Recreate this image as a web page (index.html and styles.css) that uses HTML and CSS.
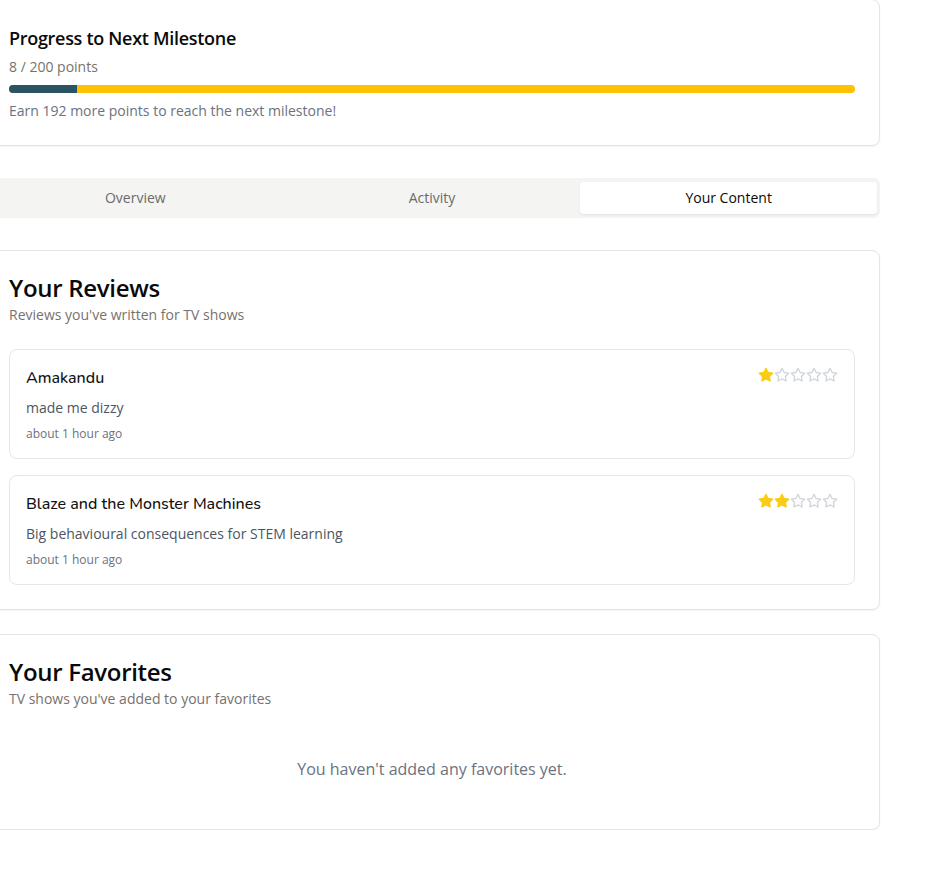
FILE: index.html
```html
<!DOCTYPE html>
<html lang="en">
<head>
<meta charset="utf-8">
<title>Your Content</title>
<link rel="stylesheet" href="styles.css">
</head>
<body>
<div class="page">
  <section class="card progress-card">
    <h3 class="progress-title">Progress to Next Milestone</h3>
    <p class="points">8 / 200 points</p>
    <div class="bar"><div class="bar-fill" style="width: 8%"></div></div>
    <p class="earn">Earn 192 more points to reach the next milestone!</p>
  </section>

  <nav class="tabs">
    <button class="tab">Overview</button>
    <button class="tab">Activity</button>
    <button class="tab active">Your Content</button>
  </nav>

  <section class="card section-card">
    <header class="card-header">
      <h2 class="card-title">Your Reviews</h2>
      <p class="card-desc">Reviews you've written for TV shows</p>
    </header>
    <div class="card-content reviews">
      <article class="review">
        <div class="review-main">
          <h4 class="review-title">Amakandu</h4>
          <p class="review-body">made me dizzy</p>
          <p class="review-time">about 1 hour ago</p>
        </div>
        <div class="stars">
          <svg class="star on" viewBox="0 0 24 24"><polygon points="12 2 15.09 8.26 22 9.27 17 14.14 18.18 21.02 12 17.77 5.82 21.02 7 14.14 2 9.27 8.91 8.26 12 2"/></svg>
          <svg class="star" viewBox="0 0 24 24"><polygon points="12 2 15.09 8.26 22 9.27 17 14.14 18.18 21.02 12 17.77 5.82 21.02 7 14.14 2 9.27 8.91 8.26 12 2"/></svg>
          <svg class="star" viewBox="0 0 24 24"><polygon points="12 2 15.09 8.26 22 9.27 17 14.14 18.18 21.02 12 17.77 5.82 21.02 7 14.14 2 9.27 8.91 8.26 12 2"/></svg>
          <svg class="star" viewBox="0 0 24 24"><polygon points="12 2 15.09 8.26 22 9.27 17 14.14 18.18 21.02 12 17.77 5.82 21.02 7 14.14 2 9.27 8.91 8.26 12 2"/></svg>
          <svg class="star" viewBox="0 0 24 24"><polygon points="12 2 15.09 8.26 22 9.27 17 14.14 18.18 21.02 12 17.77 5.82 21.02 7 14.14 2 9.27 8.91 8.26 12 2"/></svg>
        </div>
      </article>
      <article class="review">
        <div class="review-main">
          <h4 class="review-title">Blaze and the Monster Machines</h4>
          <p class="review-body">Big behavioural consequences for STEM learning</p>
          <p class="review-time">about 1 hour ago</p>
        </div>
        <div class="stars">
          <svg class="star on" viewBox="0 0 24 24"><polygon points="12 2 15.09 8.26 22 9.27 17 14.14 18.18 21.02 12 17.77 5.82 21.02 7 14.14 2 9.27 8.91 8.26 12 2"/></svg>
          <svg class="star on" viewBox="0 0 24 24"><polygon points="12 2 15.09 8.26 22 9.27 17 14.14 18.18 21.02 12 17.77 5.82 21.02 7 14.14 2 9.27 8.91 8.26 12 2"/></svg>
          <svg class="star" viewBox="0 0 24 24"><polygon points="12 2 15.09 8.26 22 9.27 17 14.14 18.18 21.02 12 17.77 5.82 21.02 7 14.14 2 9.27 8.91 8.26 12 2"/></svg>
          <svg class="star" viewBox="0 0 24 24"><polygon points="12 2 15.09 8.26 22 9.27 17 14.14 18.18 21.02 12 17.77 5.82 21.02 7 14.14 2 9.27 8.91 8.26 12 2"/></svg>
          <svg class="star" viewBox="0 0 24 24"><polygon points="12 2 15.09 8.26 22 9.27 17 14.14 18.18 21.02 12 17.77 5.82 21.02 7 14.14 2 9.27 8.91 8.26 12 2"/></svg>
        </div>
      </article>
    </div>
  </section>

  <section class="card section-card favorites">
    <header class="card-header">
      <h2 class="card-title">Your Favorites</h2>
      <p class="card-desc">TV shows you've added to your favorites</p>
    </header>
    <div class="card-content">
      <p class="empty">You haven't added any favorites yet.</p>
    </div>
  </section>
</div>
</body>
</html>
```

FILE: styles.css
```css
* { box-sizing: border-box; }

html, body {
  margin: 0;
  padding: 0;
  background: #ffffff;
}

body {
  font-family: "Open Sans", "Noto Sans", sans-serif;
  color: #0a0a0a;
}

h2, h3, h4, p { margin: 0; }

.page {
  width: 896px;
  margin: -1px 0 0 -16px;
  display: flex;
  flex-direction: column;
}

.card {
  background: #fff;
  border: 1px solid #e4e4e4;
  border-radius: 8px;
  box-shadow: 0 1px 2px rgba(0, 0, 0, 0.05);
}

/* progress card */
.progress-card {
  padding: 24px;
}

.progress-title {
  font-size: 18px;
  line-height: 28px;
  font-weight: 600;
  letter-spacing: -0.3px;
  margin-bottom: 5px;
}

.points {
  font-size: 14px;
  line-height: 20px;
  color: #78716c;
}

.bar {
  margin-top: 8px;
  height: 8px;
  border-radius: 4px;
  background: #fdc202;
  overflow: hidden;
}

.bar-fill {
  height: 100%;
  background: #2b5363;
}

.earn {
  margin-top: 8px;
  font-size: 14px;
  line-height: 20px;
  color: #6b7280;
}

/* tabs */
.tabs {
  margin-top: 32px;
  height: 40px;
  padding: 4px 3px;
  background: #f4f4f2;
  border-radius: 6px;
  display: grid;
  grid-template-columns: repeat(3, 1fr);
}

.tab {
  border: 0;
  background: transparent;
  font-family: inherit;
  font-size: 14px;
  line-height: 20px;
  color: #6b6b6b;
  border-radius: 4px;
  padding: 0 0 1px;
  cursor: pointer;
}

.tab.active {
  background: #fff;
  color: #0a0a0a;
  box-shadow: 0 1px 2px rgba(0, 0, 0, 0.08);
}

/* section cards */
.section-card {
  margin-top: 32px;
}

.section-card.favorites {
  margin-top: 24px;
}

.card-header {
  padding: 23px 24px 24px;
}

.card-title {
  font-size: 24px;
  line-height: 28px;
  font-weight: 600;
  letter-spacing: -0.3px;
}

.card-desc {
  margin-top: 3px;
  font-size: 14px;
  line-height: 20px;
  color: #78716c;
}

.card-content {
  padding: 0 24px 24px;
}

.reviews {
  display: flex;
  flex-direction: column;
  gap: 16px;
}

.review {
  border: 1px solid #e5e7eb;
  border-radius: 8px;
  padding: 16px;
  display: flex;
  justify-content: space-between;
  align-items: flex-start;
}

.review-title {
  font-family: "Nunito", "Lato", sans-serif;
  font-size: 16px;
  line-height: 24px;
  font-weight: 500;
  color: #111;
}

.review-body {
  margin-top: 8px;
  font-size: 14px;
  line-height: 20px;
  color: #4b5563;
}

.review-time {
  margin-top: 8px;
  font-size: 12px;
  line-height: 16px;
  color: #6b7280;
}

.stars {
  display: flex;
  margin-top: 1px;
}

.star {
  width: 16px;
  height: 16px;
  fill: none;
  stroke: #d1d5db;
  stroke-width: 2;
  stroke-linejoin: round;
}

.star.on {
  fill: #facc15;
  stroke: #facc15;
}

.empty {
  padding: 24px 0;
  text-align: center;
  font-size: 16px;
  line-height: 24px;
  color: #6b7280;
}
```
